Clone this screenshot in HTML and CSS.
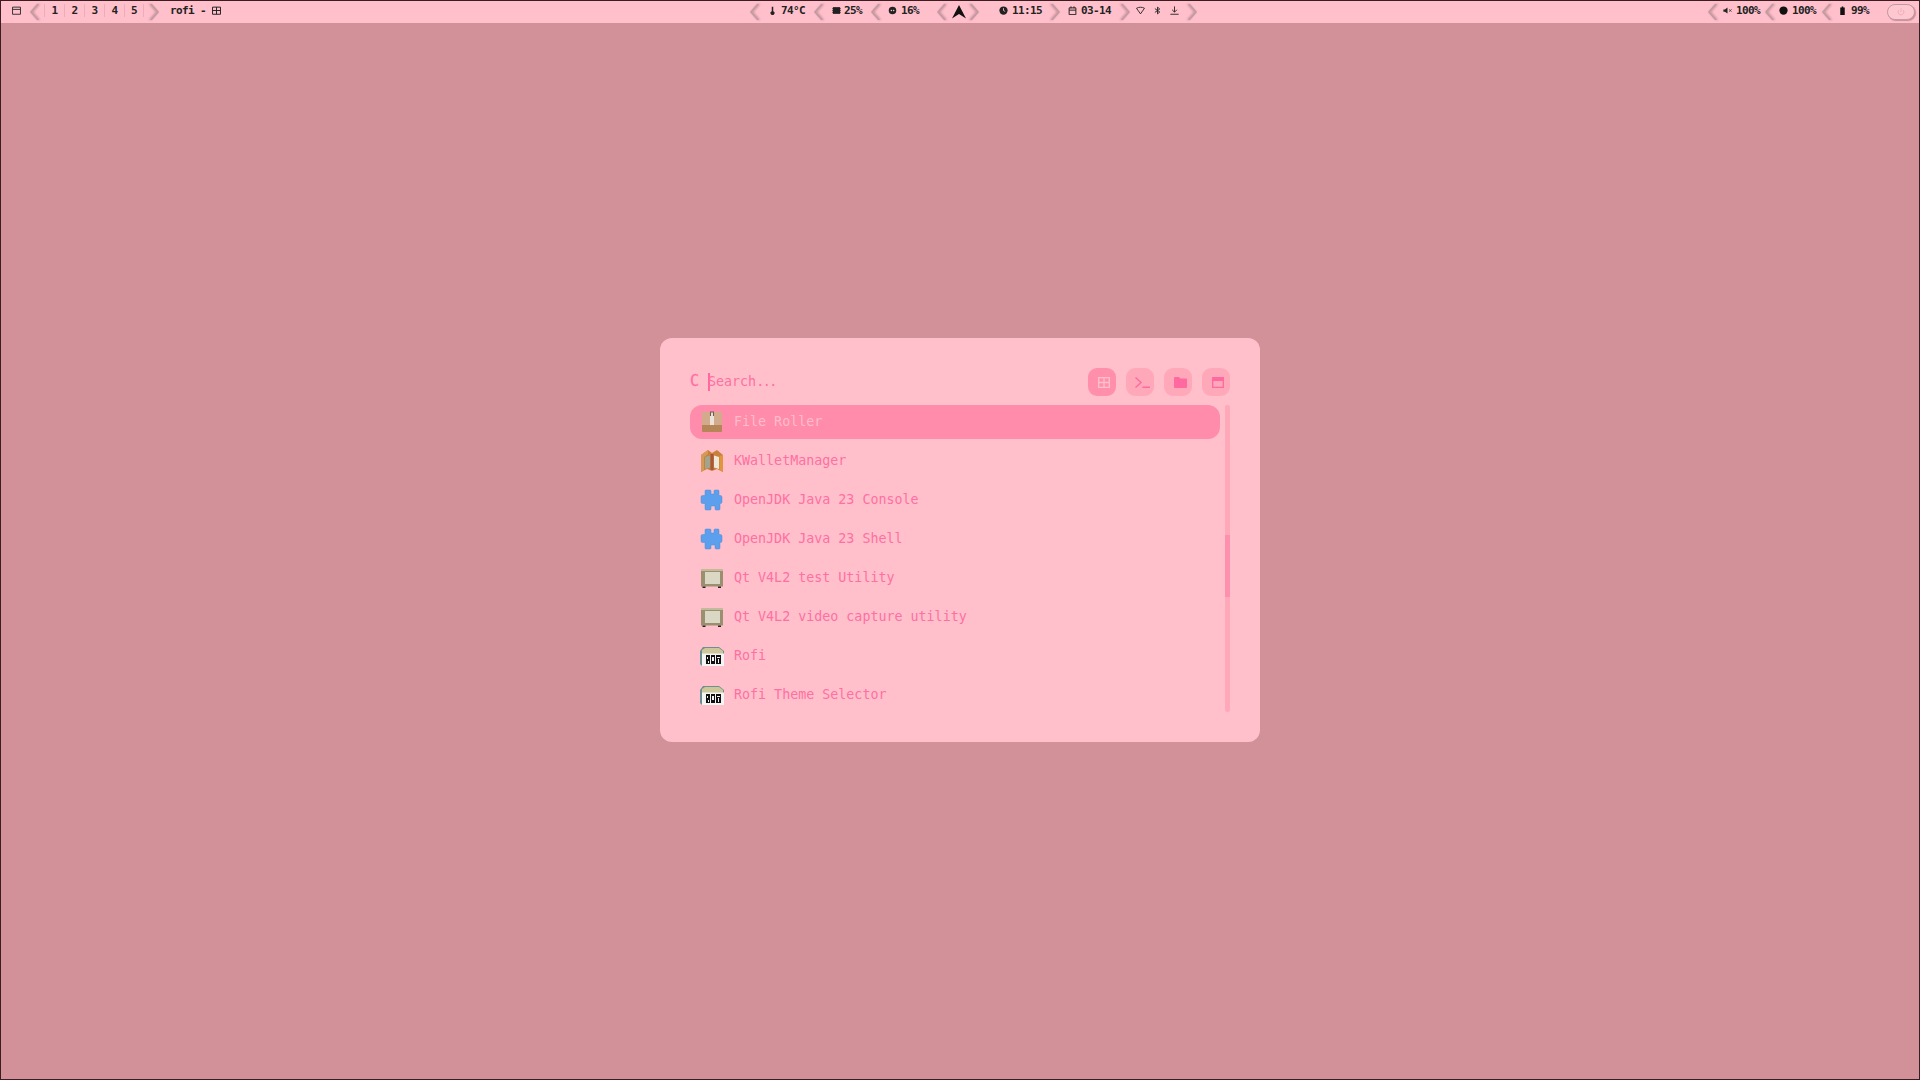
FILE: index.html
```html
<!DOCTYPE html>
<html lang="en">

<head>
    <meta charset="UTF-8">
    <title>rofi</title>
    <link rel="stylesheet" href="styles.css">
</head>

<body>
    <div class="bar">
        <div class="bar-group start">
            <svg class="ico ws-ico" viewBox="0 0 12 12"><path d="M.7 1.500h10.600v9.500H.7zM.7 4.500h10.600" fill="none" stroke="#333" stroke-width="1.300"/></svg>
            <span class="chev left"></span>
            <div class="workspaces">
                <span>1</span><span>2</span><span>3</span><span>4</span><span>5</span>
            </div>
            <span class="chev right"></span>
            <span class="title">rofi -</span>
            <svg class="ico win-ico" viewBox="0 0 12 12"><path d="M.7 1.500h10.600v9.500H.7zM.7 6h10.600M6 1.500v9.500" fill="none" stroke="#222" stroke-width="1.300"/></svg>
        </div>

        <div class="bar-group center">
            <span class="chev left"></span>
            <span class="stat w-temp"><svg class="ico" viewBox="0 0 12 12"><path d="M5 1h2v6a2.600 2.600 0 1 1-2 0z" fill="#222"/></svg>74°C</span>
            <span class="chev left"></span>
            <span class="stat w-mem"><svg class="ico" viewBox="0 0 12 12"><path d="M1.200 1.500h9.600v9H1.200z" fill="#222"/><path d="M0 3.500h12M0 6h12M0 8.500h12" stroke="#222" stroke-width=".8"/></svg>25%</span>
            <span class="chev left"></span>
            <span class="stat w-cpu"><svg class="ico" viewBox="0 0 12 12"><circle cx="6" cy="6" r="5" fill="#222"/><circle cx="4.500" cy="6" r="1" fill="#ffc0cb"/><circle cx="7.500" cy="6" r="1" fill="#ffc0cb"/></svg>16%</span>
            <span class="chev left"></span>
            <svg class="arch" viewBox="0 0 14 14"><path d="M7 0 14 13.500 7 9 0 13.500z" fill="#111"/></svg>
            <span class="chev right"></span>
            <span class="stat w-clock"><svg class="ico" viewBox="0 0 12 12"><circle cx="6" cy="6" r="5.500" fill="#222"/><path d="M6 2.800V6l2.200 1.200" fill="none" stroke="#ffc0cb" stroke-width="1.100"/></svg>11:15</span>
            <span class="chev right"></span>
            <span class="stat w-date"><svg class="ico" viewBox="0 0 12 12"><path d="M1.500 2.500h9v9h-9zM1.500 5.500h9M4 .5v2.500M8 .5v2.500" fill="none" stroke="#222" stroke-width="1.300"/></svg>03-14</span>
            <span class="chev right"></span>
            <div class="tray">
                <svg class="ico" viewBox="0 0 12 12"><path d="M.7 3C4 1.200 8 1.200 11.300 3L6 10.500z" fill="none" stroke="#222" stroke-width="1.200"/></svg>
                <svg class="ico" viewBox="0 0 12 12"><path d="M2.500 3.500 9 8 6 10.500v-9L9 4 2.500 8.500" fill="none" stroke="#222" stroke-width="1.200"/></svg>
                <svg class="ico" viewBox="0 0 12 12"><path d="M6 .5V8M2.800 5 6 8.200 9.200 5M.5 11h11" fill="none" stroke="#222" stroke-width="1.200"/></svg>
            </div>
            <span class="chev right"></span>
        </div>

        <div class="bar-group end">
            <span class="chev left"></span>
            <span class="stat w-vol"><svg class="ico" viewBox="0 0 12 12"><path d="M.5 4.500h2L6 2v8L2.500 7.500h-2z" fill="#222"/><path d="M8 4.500l3.500 3M11.500 4.500 8 7.500" stroke="#222" stroke-width=".9"/></svg>100%</span>
            <span class="chev left"></span>
            <span class="stat w-light"><svg class="ico" viewBox="0 0 12 12"><circle cx="6" cy="6" r="5.500" fill="#111"/></svg>100%</span>
            <span class="chev left"></span>
            <span class="stat w-bat"><svg class="ico" viewBox="0 0 12 12"><path d="M3 2H5V.5h2V2h2v10H3z" fill="#111"/></svg>99%</span>
            <span class="power">
                <svg class="pwr-ico" viewBox="0 0 12 12"><path d="M3.500 3.500a3.500 3.500 0 1 0 5 0M6 1.500V6" fill="none" stroke="#eaa9b3" stroke-width="1"/></svg>
            </span>
        </div>
    </div>

    <div class="desktop">
        <div class="launcher">
            <div class="search-row">
                <span class="prompt">C</span>
                <span class="caret"></span>
                <span class="placeholder">Search<span class="dots">...</span></span>
                <div class="modes">
                    <span class="mode active">
                        <svg class="mode-grid" viewBox="0 0 12 11"><path d="M.7.7h10.600v9.600H.7zM.7 5.500h10.600M6 .7v9.600" fill="none" stroke="#ffc0cb" stroke-width="1.300"/></svg>
                    </span>
                    <span class="mode">
                        <svg class="mode-term" viewBox="0 0 15 11"><path d="M.5.500 6 5.500.5 10.500M7.500 10.300H15" fill="none" stroke="#ff69a0" stroke-width="1.400"/></svg>
                    </span>
                    <span class="mode">
                        <svg class="mode-folder" viewBox="0 0 13 11"><path d="M0 1q0-1 1-1h4l1.500 1.500H12q1 0 1 1V10q0 1-1 1H1q-1 0-1-1z" fill="#ff69a0"/></svg>
                    </span>
                    <span class="mode">
                        <svg class="mode-window" viewBox="0 0 12 11"><path d="M.7.700h10.600v9.600H.7z" fill="none" stroke="#ff69a0" stroke-width="1.300"/><path d="M.7.700h10.600v3.300H.7z" fill="#ff69a0"/></svg>
                    </span>
                </div>
            </div>

            <div class="results">
                <ul class="list">
                    <li class="row selected">
                        <svg class="app-ico" viewBox="0 0 24 24">
                            <path d="M2 3q0-1 1-1h18q1 0 1 1v13H2z" fill="#d2aa8c"/>
                            <path d="M2 15h20v6q0 1-1 1H3q-1 0-1-1z" fill="#b68659"/>
                            <path d="M10 2h4v13h-4z" fill="#ebe3da"/>
                            <path d="M10 1.500h4V6h-4z" fill="#6f5a52"/>
                            <path d="M11 2.500h2V6h-2z" fill="#e8ddd2"/>
                        </svg>
                        <span>File Roller</span>
                    </li>
                    <li class="row">
                        <svg class="app-ico" viewBox="0 0 24 24">
                            <path d="M1 6 8 1 12 4 17 1 23 6V23L17 20 12 22 7 20 1 23z" fill="#c9803b"/>
                            <path d="M1 6 8 1V5L4 8V21L1 23z" fill="#d79a56"/>
                            <path d="M5 8 10 6.500V18.500L5 20z" fill="#9fa58e"/>
                            <path d="M14 6.500 19 8V20L14 18.500z" fill="#efe8d8"/>
                            <path d="M10.500 5h3v16h-3z" fill="#a8573f"/>
                            <path d="M19.500 7 23 6V23L19.500 21z" fill="#e0953e"/>
                        </svg>
                        <span>KWalletManager</span>
                    </li>
                    <li class="row">
                        <svg class="app-ico" viewBox="0 0 24 24"><path class="puzzle" d="M5 3q0-1 1-1h4q1 0 1 1v3h3V3q0-1 1-1h3q1 0 1 1v4.500h1.500q1.500 0 1.500 1.500v5q0 1.500-1.500 1.500H20V21q0 1-1 1h-3q-1 0-1-1v-3h-4v3q0 1-1 1H6q-1 0-1-1v-5.500H2.500Q1 15.500 1 14V9q0-1.500 1.500-1.500H5z"/></svg>
                        <span>OpenJDK Java 23 Console</span>
                    </li>
                    <li class="row">
                        <svg class="app-ico" viewBox="0 0 24 24"><path class="puzzle" d="M5 3q0-1 1-1h4q1 0 1 1v3h3V3q0-1 1-1h3q1 0 1 1v4.500h1.500q1.500 0 1.500 1.500v5q0 1.500-1.500 1.500H20V21q0 1-1 1h-3q-1 0-1-1v-3h-4v3q0 1-1 1H6q-1 0-1-1v-5.500H2.500Q1 15.500 1 14V9q0-1.500 1.500-1.500H5z"/></svg>
                        <span>OpenJDK Java 23 Shell</span>
                    </li>
                    <li class="row">
                        <svg class="app-ico" viewBox="0 0 24 24">
                            <path d="M1 3h22v17.500H1z" fill="#9a9070"/>
                            <path d="M1 3h22v2H1z" fill="#c2ba9a"/>
                            <path d="M5 6h15v12H5z" fill="#dad7c5"/>
                            <path d="M2.500 20.500h3V22h-3zM18 20.500h3V22h-3z" fill="#222"/>
                        </svg>
                        <span>Qt V4L2 test Utility</span>
                    </li>
                    <li class="row">
                        <svg class="app-ico" viewBox="0 0 24 24">
                            <path d="M1 3h22v17.500H1z" fill="#9a9070"/>
                            <path d="M1 3h22v2H1z" fill="#c2ba9a"/>
                            <path d="M5 6h15v12H5z" fill="#dad7c5"/>
                            <path d="M2.500 20.500h3V22h-3zM18 20.500h3V22h-3z" fill="#222"/>
                        </svg>
                        <span>Qt V4L2 video capture utility</span>
                    </li>
                    <li class="row">
                        <svg class="app-ico" viewBox="0 0 24 24">
                            <path d="M0 7 3 3h16l5 4v15H2l-2-2z" fill="#6d8f90"/>
                            <path d="M2 6 5 4h14l4 3v3H2z" fill="#ccc69a"/>
                            <path d="M2 9.500h22V22H2z" fill="#f4f4f4"/>
                            <path d="M6 11h4v9H6zM11 11h4v9h-4zM16 11h5v9h-5z" fill="#111"/>
                            <path d="M7 13h1v2H7zM8 17h1v2H8zM12 13h2v4h-2zM17 13h3v1h-3zM18 15h1v4h-1z" fill="#f4f4f4"/>
                        </svg>
                        <span>Rofi</span>
                    </li>
                    <li class="row">
                        <svg class="app-ico" viewBox="0 0 24 24">
                            <path d="M0 7 3 3h16l5 4v15H2l-2-2z" fill="#6d8f90"/>
                            <path d="M2 6 5 4h14l4 3v3H2z" fill="#ccc69a"/>
                            <path d="M2 9.500h22V22H2z" fill="#f4f4f4"/>
                            <path d="M6 11h4v9H6zM11 11h4v9h-4zM16 11h5v9h-5z" fill="#111"/>
                            <path d="M7 13h1v2H7zM8 17h1v2H8zM12 13h2v4h-2zM17 13h3v1h-3zM18 15h1v4h-1z" fill="#f4f4f4"/>
                        </svg>
                        <span>Rofi Theme Selector</span>
                    </li>
                </ul>
                <div class="scrollbar"><div class="thumb"></div></div>
            </div>
        </div>
    </div>
</body>

</html>
```

FILE: styles.css
```css
* {
    box-sizing: border-box;
}

html,
body {
    height: 100%;
}

body {
    margin: 0;
    background-color: #d29198;
    border: 1px solid #3a1c22;
    display: flex;
    flex-direction: column;
    overflow: hidden;
}

/* top bar */

.bar {
    height: 22px;
    background-color: #ffc0cb;
    display: flex;
    align-items: center;
    font-family: "DejaVu Sans Mono", monospace;
    font-size: 11px;
    font-weight: bold;
    letter-spacing: -0.62px;
    color: #222;
}

.bar-group {
    display: flex;
    align-items: center;
    height: 22px;
}

.bar-group.start {
    width: 749px;
}

.bar-group.end {
    margin-left: auto;
}

.ico {
    width: 9px;
    height: 9px;
    flex: none;
}

.ws-ico {
    margin: 0 0 4px 11px;
}

.win-ico {
    margin: 0 0 4px 6px;
}

.chev {
    width: 9px;
    height: 16px;
    flex: none;
    filter: drop-shadow(1px 0 1px rgba(70, 30, 40, .4)) blur(.4px);
}

.chev::before {
    content: "";
    display: block;
    width: 9px;
    height: 16px;
    background-color: #c09aa1;
    clip-path: polygon(7px 0, 9px 0, 2px 8px, 9px 16px, 7px 16px, 0 8px);
}

.chev.right {
    transform: scaleX(-1);
}

.start .chev.left {
    margin-left: 9px;
}

.workspaces {
    display: flex;
    margin: 0 6px 4px 5px;
}

.workspaces span {
    width: 20px;
    text-align: center;
    border-left: 1px solid rgba(170, 120, 130, .25);
}

.workspaces span:last-child {
    border-right: 1px solid rgba(170, 120, 130, .25);
}

.title {
    margin: 0 0 4px 11px;
}

.stat {
    display: flex;
    align-items: center;
    gap: 4px;
    margin-bottom: 4px;
}

.w-temp {
    margin-left: 9px;
    margin-right: 9px;
}

.w-mem {
    margin-left: 9px;
    margin-right: 9px;
    gap: 3px;
}

.w-cpu {
    margin-left: 8px;
    margin-right: 18px;
}

.arch {
    width: 14px;
    height: 14px;
    margin: 0 4px 0 6px;
}

.w-clock {
    margin-left: 20px;
    margin-right: 9px;
}

.w-date {
    margin-left: 8px;
    margin-right: 10px;
}

.tray {
    display: flex;
    gap: 8px;
    margin: 0 9px 4px 6px;
}

.w-vol {
    margin-left: 6px;
    margin-right: 5px;
}

.w-light {
    margin-left: 5px;
    margin-right: 6px;
}

.w-bat {
    margin-left: 7px;
    margin-right: 18px;
}

.power {
    width: 28px;
    height: 16px;
    margin-right: 4px;
    border: 1px solid #c09aa1;
    border-radius: 8px;
    background-color: #ffc8d1;
    box-shadow: 1px 1px 1px rgba(70, 30, 40, .3);
    display: flex;
    align-items: center;
    justify-content: center;
}

.pwr-ico {
    width: 10px;
    height: 10px;
}

/* launcher */

.desktop {
    flex: 1;
    position: relative;
}

.launcher {
    position: absolute;
    top: 315px;
    left: 659px;
    width: 600px;
    height: 404px;
    padding: 30px;
    background-color: #ffc0cb;
    border-radius: 12px;
    font-family: "DejaVu Sans Mono", monospace;
    font-size: 13.33px;
    color: #ff6fa3;
}

.search-row {
    display: flex;
    align-items: center;
    height: 28px;
}

.prompt {
    width: 18px;
    font-size: 15px;
    margin-bottom: 2px;
    -webkit-text-stroke: .3px #ff6fa3;
}

.caret {
    width: 2px;
    height: 18px;
    background-color: #ff69a0;
    margin-right: -2px;
}

.placeholder {
    margin-bottom: 2px;
}

.dots {
    letter-spacing: -1.5px;
}

.modes {
    margin-left: auto;
    display: flex;
    gap: 10px;
}

.mode {
    width: 28px;
    height: 28px;
    padding-left: 4px;
    border-radius: 9px;
    background-color: #ffa8b9;
    display: flex;
    align-items: center;
    justify-content: center;
}

.mode.active {
    background-color: #ff8fab;
}

.mode-grid,
.mode-window {
    width: 12px;
    height: 11px;
}

.mode-term {
    width: 15px;
    height: 11px;
}

.mode-folder {
    width: 13px;
    height: 11px;
}

.results {
    display: flex;
    gap: 5px;
    margin-top: 9px;
}

.list {
    flex: 1;
    list-style: none;
    margin: 0;
    padding: 0;
    display: flex;
    flex-direction: column;
    gap: 5px;
}

.row {
    height: 34px;
    display: flex;
    align-items: center;
    gap: 10px;
    padding-left: 10px;
    border-radius: 12px;
}

.row span {
    margin-bottom: 2px;
}

.row.selected {
    background-color: #ff8cab;
    color: #ffbcc8;
}

.app-ico {
    width: 24px;
    height: 24px;
    flex: none;
}

.puzzle {
    fill: #5c9fec;
    stroke: #4f8dd8;
    stroke-width: .5;
}

.scrollbar {
    width: 5px;
    height: 307px;
    border-radius: 2px;
    background-color: #ffa8b9;
    position: relative;
}

.thumb {
    position: absolute;
    top: 130px;
    width: 5px;
    height: 62px;
    background-color: #ff90ad;
}
```
